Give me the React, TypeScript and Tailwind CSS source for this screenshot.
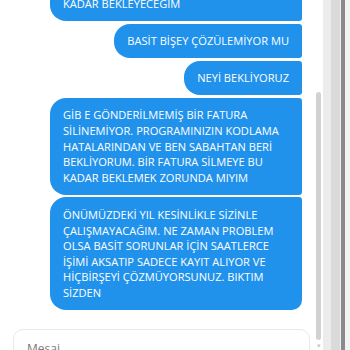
import React from 'react';

interface Bubble {
  lines: string[];
  wide?: boolean;
  last?: boolean;
}

const messages: Bubble[] = [
  { lines: ['BU FATURAYI SİLMEK İÇİN DAHA NE', 'KADAR BEKLEYECEĞİM'], wide: true },
  { lines: ['BASİT BİŞEY ÇÖZÜLEMİYOR MU'] },
  { lines: ['NEYİ BEKLİYORUZ'] },
  {
    lines: [
      'GİB E GÖNDERİLMEMİŞ BİR FATURA',
      'SİLİNEMİYOR. PROGRAMINIZIN KODLAMA',
      'HATALARINDAN VE BEN SABAHTAN BERİ',
      'BEKLİYORUM. BİR FATURA SİLMEYE BU',
      'KADAR BEKLEMEK ZORUNDA MIYIM',
    ],
    wide: true,
  },
  {
    lines: [
      'ÖNÜMÜZDEKİ YIL KESİNLİKLE SİZİNLE',
      'ÇALIŞMAYACAĞIM. NE ZAMAN PROBLEM',
      'OLSA BASİT SORUNLAR İÇİN SAATLERCE',
      'İŞİMİ AKSATIP SADECE KAYIT ALIYOR VE',
      'HİÇBİRŞEYİ ÇÖZMÜYORSUNUZ. BIKTIM',
      'SİZDEN',
    ],
    wide: true,
    last: true,
  },
];

const App: React.FC = () => {
  return (
    <div className="flex h-[350px] w-[350px] overflow-hidden bg-white font-['Open_Sans',sans-serif]">
      {/* chat column */}
      <div className="flex h-[350px] w-[313px] shrink-0 flex-col overflow-hidden">
        <div className="flex h-[310px] shrink-0 flex-col items-end justify-end gap-[2.5px] overflow-hidden pr-[11px]">
          {messages.map((m, i) => (
            <div
              key={i}
              className={`shrink-0 rounded-l-[16px] rounded-tr-[3px] bg-[#2192ec] px-[13px] py-[9.5px] text-[11.1px] leading-[15.6px] text-white ${
                m.wide ? 'w-[252px]' : ''
              } ${m.last ? 'rounded-br-[10px]' : 'rounded-br-[3px]'}`}
            >
              {m.lines.map((l, j) => (
                <div key={j} className="whitespace-nowrap">
                  {l}
                </div>
              ))}
            </div>
          ))}
        </div>
        <div className="mt-[19px] pl-[13px] pr-[3px]">
          <div className="h-[44px] rounded-[10px] border border-[#e8e8e8] px-[13px] pt-[10px] text-[12px] text-[#7a7a7a]">
            Mesaj
          </div>
        </div>
      </div>

      {/* scrollbars */}
      <div className="flex h-full flex-1">
        <div className="w-[3px]" />
        <div className="flex w-[5px] flex-col pt-[92px]">
          <div className="flex-1 rounded-full bg-[#d2d2d2]" />
          <div className="flex h-[10px] items-center justify-center text-[7px] leading-none text-[#c8c8c8]">▾</div>
        </div>
        <div className="w-[1.5px]" />
        <div className="w-[8px] bg-[#ececec]" />
        <div className="w-[9px] bg-[#dadada]" />
        <div className="w-[1.5px] bg-[#f0f0f0]" />
        <div className="w-[4px] bg-[#8a8a8a]" />
        <div className="flex-1 bg-[#f3f3f3]" />
      </div>
    </div>
  );
};

export default App;
